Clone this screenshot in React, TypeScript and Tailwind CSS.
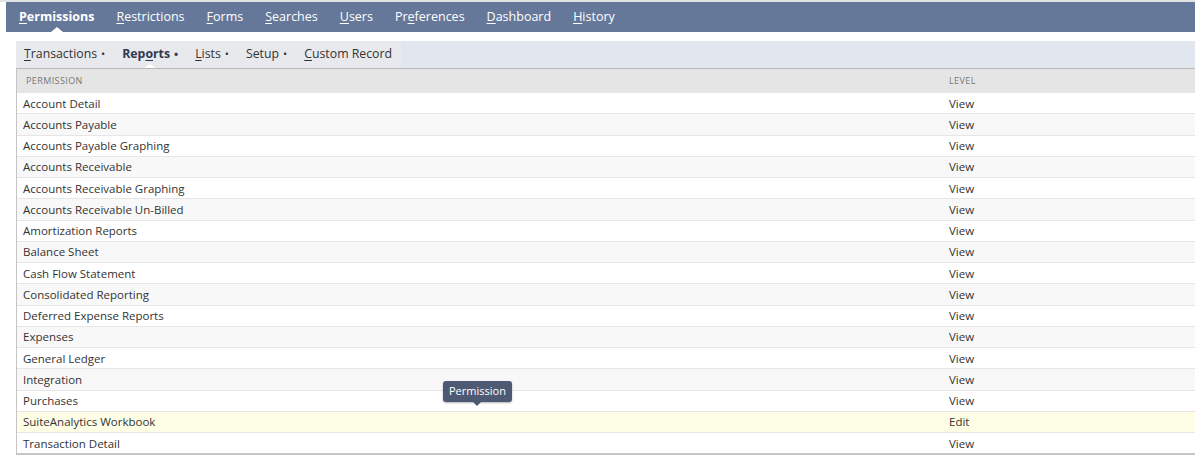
import React from 'react';

const tabs = [
  { key: 'P', rest: 'ermissions', active: true },
  { key: 'R', rest: 'estrictions' },
  { key: 'F', rest: 'orms' },
  { key: 'S', rest: 'earches' },
  { key: 'U', rest: 'sers' },
  { pre: 'Pr', key: 'e', rest: 'ferences' },
  { key: 'D', rest: 'ashboard' },
  { key: 'H', rest: 'istory' },
];

const rows: [string, string][] = [
  ['Account Detail', 'View'],
  ['Accounts Payable', 'View'],
  ['Accounts Payable Graphing', 'View'],
  ['Accounts Receivable', 'View'],
  ['Accounts Receivable Graphing', 'View'],
  ['Accounts Receivable Un-Billed', 'View'],
  ['Amortization Reports', 'View'],
  ['Balance Sheet', 'View'],
  ['Cash Flow Statement', 'View'],
  ['Consolidated Reporting', 'View'],
  ['Deferred Expense Reports', 'View'],
  ['Expenses', 'View'],
  ['General Ledger', 'View'],
  ['Integration', 'View'],
  ['Purchases', 'View'],
  ['SuiteAnalytics Workbook', 'Edit'],
  ['Transaction Detail', 'View'],
];

function Bullet() {
  return <span className="ml-[4px] text-[11px]">•</span>;
}

export default function App() {
  return (
    <div className="relative w-[1195px] h-[462px] bg-white overflow-hidden text-[#333] font-['Open_Sans',sans-serif]">
      <div className="h-[2px] bg-[#e2e2e2]" />
      {/* main tabs */}
      <div className="ml-[6px] h-[30px] bg-[#66789a] flex items-center pl-[13px] gap-[22px] text-white text-[12.5px]">
        {tabs.map((t) => (
          <div key={t.rest} className={`relative h-full flex items-center ${t.active ? 'font-bold' : ''}`}>
            <span>
              {t.pre}
              <span className="underline underline-offset-2">{t.key}</span>
              {t.rest}
            </span>
            {t.active && (
              <span className="absolute bottom-0 left-1/2 -translate-x-1/2 w-0 h-0 border-x-[6px] border-x-transparent border-b-[5px] border-b-white" />
            )}
          </div>
        ))}
      </div>

      {/* subtabs */}
      <div className="mt-[9px] ml-[16px] h-[27px] bg-[#e1e6ef] flex">
        <div className="h-full bg-[#e8e9ec] flex items-center pl-[8px] pr-[9px] gap-[17px] text-[12.3px] text-[#333]">
          <span>
            <span className="underline underline-offset-2">T</span>ransactions
            <Bullet />
          </span>
          <span className="relative h-full flex items-center font-bold text-[#2e3a52]">
            <span>
              Rep<span className="underline underline-offset-2">o</span>rts
              <Bullet />
            </span>
            <span className="absolute bottom-0 left-[22px] w-0 h-0 border-x-[6px] border-x-transparent border-b-[4px] border-b-white" />
          </span>
          <span>
            <span className="underline underline-offset-2">L</span>ists
            <Bullet />
          </span>
          <span>
            Setup
            <Bullet />
          </span>
          <span>
            <span className="underline underline-offset-2">C</span>ustom Record
          </span>
        </div>
      </div>

      {/* table */}
      <div className="ml-[16px] border-l border-[#c4c4c4] border-t border-t-[#b8b8b8] border-b-2 border-b-[#c6c6c6]">
        <div className="grid grid-cols-[924px_1fr] h-[23px] bg-[#e5e5e5] items-center text-[9px] uppercase tracking-[0.4px] text-[#777]">
          <div className="pl-[9px]">Permission</div>
          <div className="pl-[8px]">Level</div>
        </div>
        {rows.map(([name, level], i) => {
          const hl = name === 'SuiteAnalytics Workbook';
          const bg = hl ? 'bg-[#fefde6]' : i % 2 === 1 ? 'bg-[#f8f8f8]' : 'bg-white';
          return (
            <div
              key={name}
              className={`grid grid-cols-[924px_1fr] h-[21.25px] items-center text-[11.5px] border-t border-[#e6e6e6] first:border-t-0 ${bg}`}
            >
              <div className="pl-[6px]">{name}</div>
              <div className="pl-[8px]">{level}</div>
            </div>
          );
        })}
      </div>

      {/* tooltip */}
      <div className="absolute left-[443px] top-[381px] h-[21px] px-[6px] flex items-center rounded-[3px] bg-[#4e5a73] text-white text-[11px] shadow-[0_1px_2px_rgba(0,0,0,0.3)]">
        Permission
        <span className="absolute top-full left-1/2 -translate-x-1/2 w-0 h-0 border-x-[4px] border-x-transparent border-t-[4px] border-t-[#4e5a73]" />
      </div>
    </div>
  );
}
